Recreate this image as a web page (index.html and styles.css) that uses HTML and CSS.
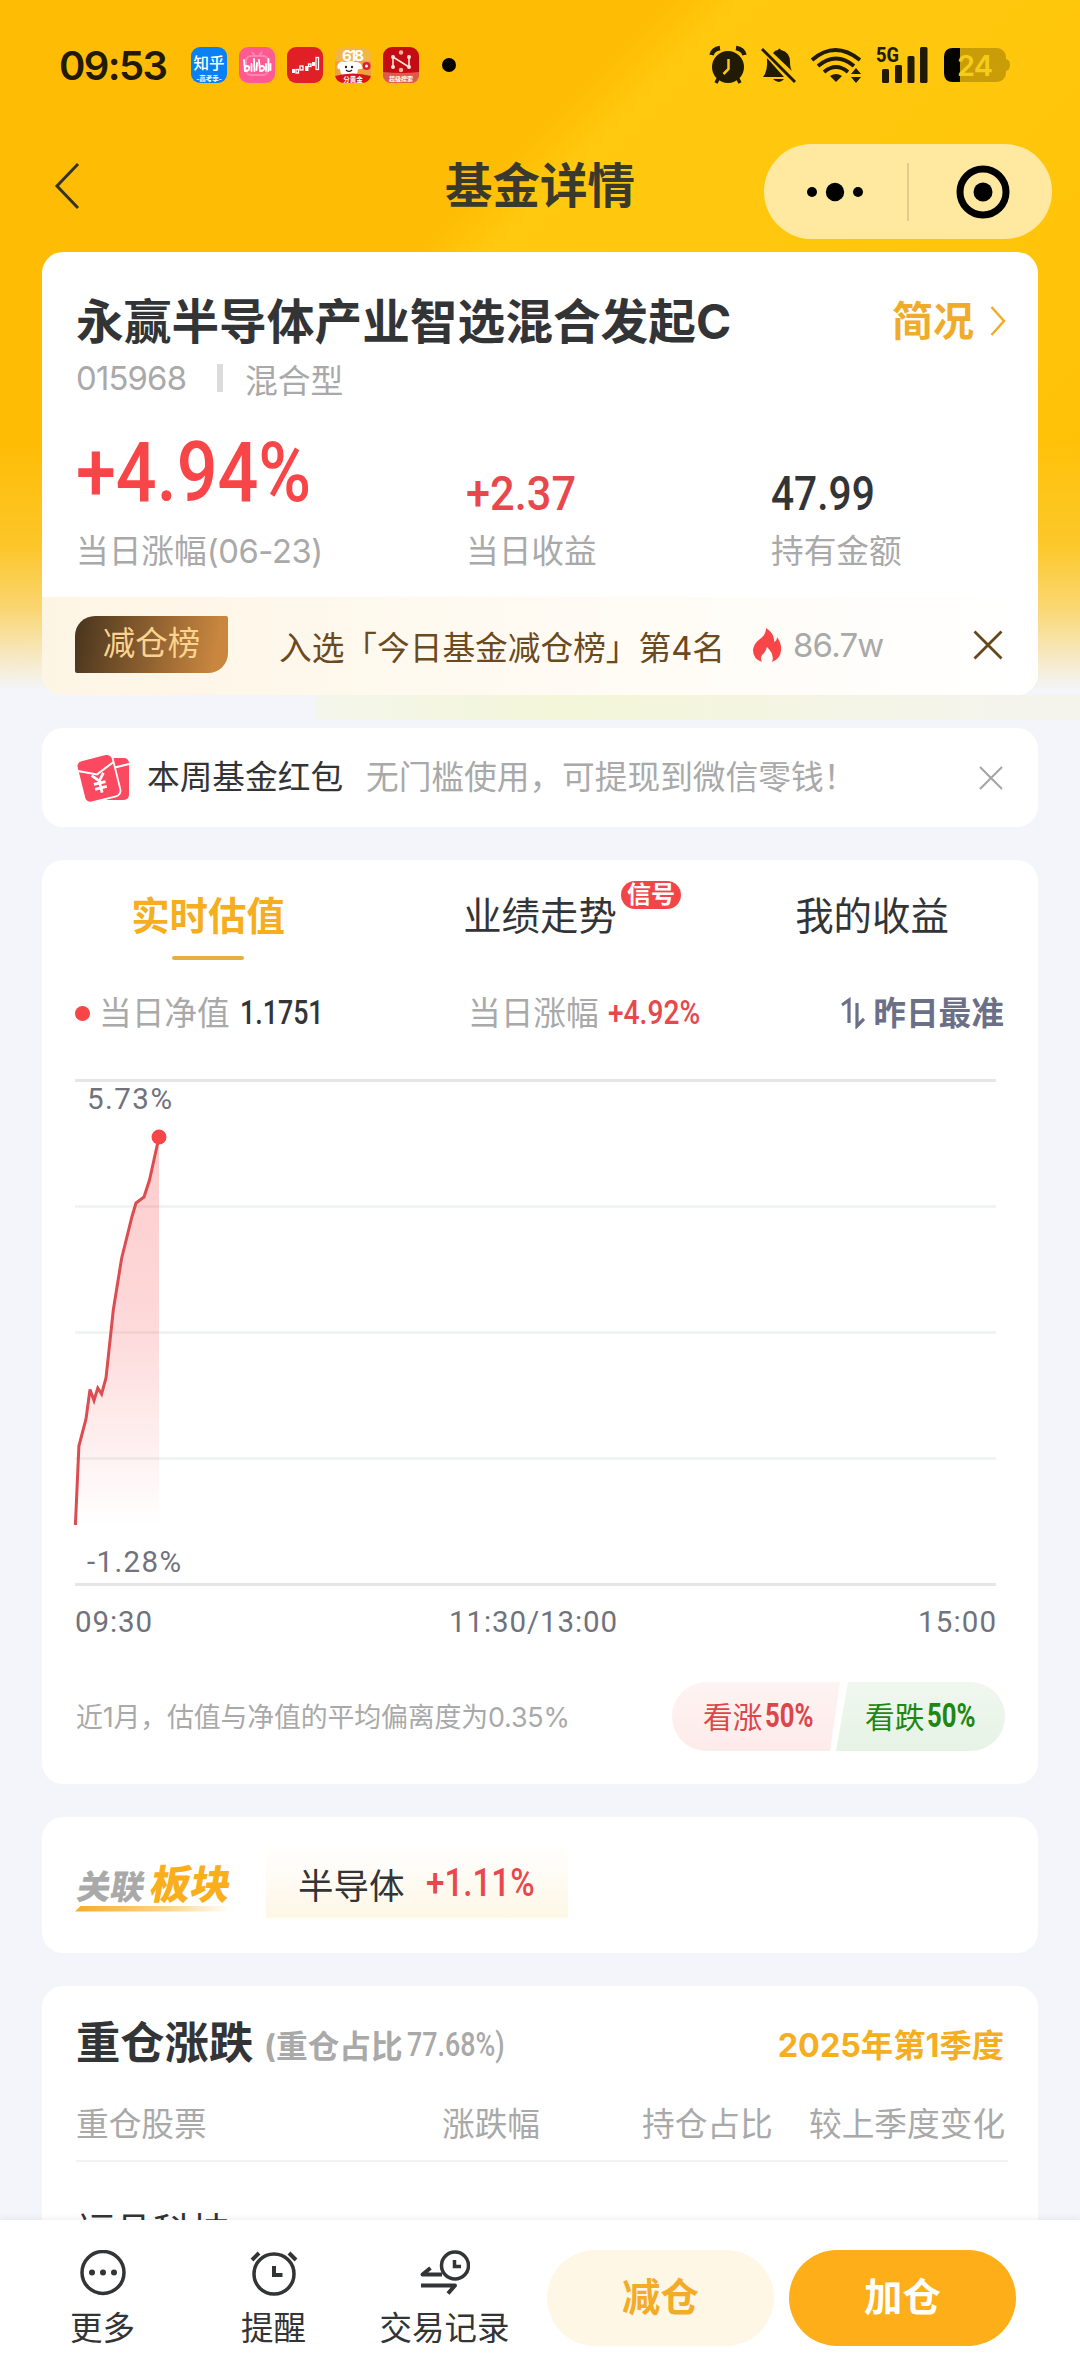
FILE: index.html
```html
<!DOCTYPE html>
<html lang="zh-CN">
<head>
<meta charset="utf-8">
<title>基金详情</title>
<link rel="stylesheet" href="styles.css">
</head>
<body>
<div class="page">
  <main class="content">
    <div class="status">
      <span class="clock">09:53</span>
      <div class="apps">
        <svg width="36" height="36" viewBox="0 0 36 36"><rect width="36" height="36" rx="9" fill="#0a80f5"/><text x="18" y="22" font-size="15.5" font-weight="500" fill="#fff" text-anchor="middle">知乎</text><text x="18" y="34" font-size="6.5" font-weight="700" fill="#fff" text-anchor="middle">-高考季-</text></svg>
        <svg width="36" height="36" viewBox="0 0 36 36"><rect width="36" height="36" rx="9" fill="#ff5b92"/><path d="M13 5l3 4M23 5l-3 4" stroke="#ff86b0" stroke-width="2"/><rect x="7" y="9" width="22" height="19" rx="5" fill="none" stroke="#ff86b0" stroke-width="2"/><g fill="none" stroke="#fff" stroke-width="1.8" stroke-linecap="round"><path d="M5 13l1 11q5 0 4-4q-2-2-4 0M12.500 17v7M15 12l.5 12M18 16l-.5 7M20 13l1 11q5 0 4-4q-2-2-4 0M27 17v7M29.500 12v12M31.500 17v6"/></g></svg>
        <svg width="36" height="36" viewBox="0 0 36 36"><rect width="36" height="36" rx="9" fill="#e01f26"/><g fill="#fff"><rect x="5" y="22" width="3" height="4"/><rect x="18" y="19" width="3.500" height="5"/><rect x="25" y="15" width="3" height="4"/></g><g fill="none" stroke="#fff" stroke-width="1.300"><rect x="9" y="22.500" width="2.500" height="3.500"/><rect x="13" y="19" width="3" height="4"/><rect x="21.500" y="17" width="2.500" height="2.500"/><rect x="29" y="10.500" width="2.500" height="12"/></g></svg>
        <svg width="36" height="36" viewBox="0 0 36 36"><rect width="36" height="36" rx="9" fill="#f3b545"/><rect width="36" height="15" y="14" fill="#e8963e" opacity=".6"/><text x="18" y="14" font-size="15" font-weight="700" fill="#fff" text-anchor="middle" textLength="22">618</text><path d="M2 20q2-7 8-5q6-2 10 0q6-1 8 6q-3 2-5 1q0 8-9 8t-9-8q-2 1-3-2z" fill="#fff"/><circle cx="11" cy="20" r="1.200" fill="#222"/><circle cx="17" cy="20" r="1.200" fill="#222"/><path d="M11 23q3 3 6 0" fill="none" stroke="#222" stroke-width="1.200"/><circle cx="31.500" cy="19" r="4" fill="#d8232a"/><circle cx="31.500" cy="19" r="1.500" fill="#fff"/><path d="M0 29q18-5 36 0q-2 7-9 7H9q-7 0-9-7z" fill="#d8131b"/><text x="18" y="35" font-size="6.500" font-weight="700" fill="#fff" text-anchor="middle">分黄金</text></svg>
        <svg width="36" height="36" viewBox="0 0 36 36"><rect width="36" height="36" rx="9" fill="#c40c14"/><path d="M0 25q18 2 36 0v2q0 9-9 9H9q-9 0-9-9z" fill="#dd5a4e"/><g stroke="#ffe3d8" stroke-width="1.600" fill="#ffe3d8"><path d="M10 20V10l16 10V10" fill="none"/><circle cx="10" cy="10" r="1.200"/><circle cx="10" cy="20" r="1.200"/><circle cx="26" cy="10" r="1.200"/><circle cx="26" cy="20" r="1.200"/></g><circle cx="18" cy="5.500" r="2.200" fill="#f6b5a8"/><circle cx="18" cy="23" r="2.200" fill="#f6b5a8"/><text x="18" y="34" font-size="6" font-weight="700" fill="#fff" text-anchor="middle">超级搜索</text></svg>
      </div>
      <span class="more-dot"></span>
      <div class="system">
        <svg width="38" height="40" viewBox="0 0 38 40"><circle cx="19" cy="22" r="16" fill="#211a04"/><g stroke="#211a04" fill="none"><path d="M2.500 10Q4 4 11 3M27 3q7 1 8.500 7" stroke-width="4.500"/><path d="M9.500 33l-2.500 5M28.500 33l2.500 5" stroke-width="3.500"/></g><path d="M19.500 14v10l-5 5" fill="none" stroke="#fdc60c" stroke-width="2.500"/></svg>
        <svg class="bell" width="38" height="38" viewBox="0 0 38 38"><path d="M13 7q2-3 5-3q1-3 3 0q9 2 9 12q0 6 2 9zM7 12l17 19H3q5-6 4-19z" fill="#211a04"/><path d="M13 33h11q-5 6-11 0z" fill="#211a04"/><path d="M2 3l33 33" stroke="#211a04" stroke-width="3"/></svg>
        <svg class="wifi" width="54" height="38" viewBox="0 0 54 38"><g fill="none" stroke="#211a04" stroke-width="3.800"><path d="M2 14q23-20 48 0"/><path d="M8 20q18-15 36 0"/><path d="M14 26q12-10 24 0"/></g><path d="M20 30q6-4 12 0l-6 6z" fill="#211a04"/><path d="M41 28l5-6l5 6zM41 31l5 6l5-6z" fill="#211a04"/></svg>
        <svg class="signal" width="54" height="40" viewBox="0 0 54 40"><g fill="#211a04"><rect x="7" y="24" width="7" height="14" rx="1.500"/><rect x="20" y="20" width="7" height="18" rx="1.500"/><rect x="32.500" y="11" width="7" height="27" rx="1.500"/><rect x="45" y="2" width="7.500" height="36" rx="1.500"/><text class="net" x="1" y="16.500" textLength="23" lengthAdjust="spacingAndGlyphs">5G</text></g></svg>
        <svg class="battery" width="68" height="36" viewBox="0 0 68 36"><rect x="1" y="1" width="62" height="34" rx="9" fill="#c99d08"/><path d="M63 12q4 1 4 6t-4 6z" fill="#c99d08"/><path d="M17 1v34h-7q-9 0-9-9V10q0-9 9-9z" fill="#050400"/><text x="14" y="29" font-size="29" font-weight="600" fill="#f5cd18" textLength="36">24</text></svg>
      </div>
    </div>

    <div class="nav">
      <svg class="back" width="28" height="48" viewBox="0 0 28 48"><path d="M26 2L5 24l21 22" fill="none" stroke="#333426" stroke-width="3"/></svg>
      <h1>基金详情</h1>
      <div class="capsule">
        <svg width="58" height="20" viewBox="0 0 58 20"><circle cx="6" cy="10" r="5"/><circle cx="29" cy="10" r="9.200"/><circle cx="52" cy="10" r="5"/></svg>
        <span class="divider"></span>
        <svg width="54" height="54" viewBox="0 0 54 54"><circle cx="27" cy="27" r="23" fill="none" stroke="#000" stroke-width="7"/><circle cx="27" cy="27" r="9.500"/></svg>
      </div>
    </div>

    <section class="card summary">
      <div class="title-row"><h2>永赢半导体产业智选混合发起C</h2><div class="brief">简况<svg width="16" height="32" viewBox="0 0 16 32"><path d="M1.500 2L14 16L1.500 30" fill="none" stroke="#f0ab2a" stroke-width="2.500"/></svg></div></div>
      <div class="code-row"><span class="code">015968</span><i></i><span>混合型</span></div>
      <div class="stats">
        <div><b class="din big">+4.94%</b><span>当日涨幅<em>(06-23)</em></span></div>
        <div><b class="din red">+2.37</b><span>当日收益</span></div>
        <div><b class="din dark">47.99</b><span>持有金额</span></div>
      </div>
      <div class="rank">
        <span class="rank-tag">减仓榜</span>
        <span class="rank-text">入选「今日基金减仓榜」第4名</span>
        <svg width="30" height="34" viewBox="0 0 30 34"><path d="M14 0Q23 6 22 14Q25 13 25 9Q30 16 29 23Q28 31 20 34Q23 27 15 19Q13 25 10 27Q8 30 10 34Q1 31 1 22Q2 15 8 11Q14 7 14 0Z" fill="#f84548"/></svg>
        <span class="heat">86.7w</span>
        <svg class="close" width="30" height="30" viewBox="0 0 30 30"><path d="M1.500 1.500l27 27M28.500 1.500l-27 27" stroke="#65471d" stroke-width="2.800"/></svg>
      </div>
    </section>

    <section class="card packet">
      <svg width="53" height="50" viewBox="0 0 53 50"><rect x="25" y="5" width="27" height="42" rx="5" fill="#fb4a60"/><path d="M36 15l16-4" stroke="#fff" stroke-width="2"/><g transform="rotate(-14 22 25)"><rect x="3" y="3.500" width="37" height="43.500" rx="6" fill="#fb4a60" stroke="#fff" stroke-width="1.800"/><path d="M3 13l18 8l19-8" fill="none" stroke="#fff" stroke-width="2"/><path d="M15.500 21l6 7l6-7M21.500 28v12M15.500 30h12M15.500 35h12" fill="none" stroke="#fff" stroke-width="2.800"/></g></svg>
      <strong>本周基金红包</strong>
      <span>无门槛使用，可提现到微信零钱！</span>
      <svg class="close" width="24" height="24" viewBox="0 0 24 24"><path d="M1 1l22 22M23 1L1 23" stroke="#a3a3a3" stroke-width="2"/></svg>
    </section>

    <section class="card valuation">
      <div class="tabs">
        <div class="tab active">实时估值</div>
        <div class="tab">业绩走势<span class="signal-badge">信号</span></div>
        <div class="tab">我的收益</div>
      </div>
      <div class="info">
        <i></i><span>当日净值</span><b class="din nav-value">1.1751</b>
        <span class="second">当日涨幅</span><b class="din change">+4.92%</b>
        <div class="accurate"><svg width="24" height="32" viewBox="0 0 24 32"><path d="M1 8l7-5v23M16 6v23l7-7" fill="none" stroke="#6b7088" stroke-width="3.200"/></svg>昨日最准</div>
      </div>
      <svg class="chart" width="930" height="561" viewBox="0 0 930 561">
        <defs><linearGradient id="area" x1="0" y1="58" x2="0" y2="446" gradientUnits="userSpaceOnUse"><stop offset="0" stop-color="#f84548" stop-opacity=".28"/><stop offset=".5" stop-color="#f84548" stop-opacity=".2"/><stop offset="1" stop-color="#f84548" stop-opacity="0"/></linearGradient></defs>
        <path d="M0 127.500h921M0 253.500h921M0 379.500h921" stroke="#f0f1f1" stroke-width="2.500"/>
        <path d="M0 1.500h921M0 505.500h921" stroke="#e5e6e6" stroke-width="3"/>
        <path d="M.4 446L3.900 367L11 340L15 310.500L19 321.500L22.800 309L26.600 315L31 299L38.300 231L46.600 179.500L57 137.500L61 124L69 118L74.500 101L84 58V446Z" fill="url(#area)"/>
        <path d="M.4 446L3.900 367L11 340L15 310.500L19 321.500L22.800 309L26.600 315L31 299L38.300 231L46.600 179.500L57 137.500L61 124L69 118L74.500 101L84 58" fill="none" stroke="#dc4c50" stroke-width="3"/>
        <circle cx="84" cy="58" r="7.500" fill="#f84548"/>
        <g class="axis">
          <text x="12" y="30" textLength="85">5.73%</text>
          <text x="12" y="493" textLength="94">-1.28%</text>
          <text x="0" y="553" textLength="77">09:30</text>
          <text x="374" y="553" textLength="168">11:30/13:00</text>
          <text x="843" y="553" textLength="78">15:00</text>
        </g>
      </svg>
      <div class="vote">
        <span class="note">近1月，估值与净值的平均偏离度为0.35%</span>
        <div class="up">看涨<b class="din">50%</b></div>
        <div class="down">看跌<b class="din">50%</b></div>
      </div>
    </section>

    <section class="card sector">
      <div class="sector-logo"><div><span>关联</span><b>板块</b></div><i></i></div>
      <div class="chip">半导体<b class="din">+1.11%</b></div>
    </section>

    <section class="card holdings">
      <div class="hold-title"><h3>重仓涨跌</h3><span class="ratio">(重仓占比</span><b class="din">77.68%)</b><span class="quarter">2025年第1季度</span></div>
      <div class="hold-head"><span>重仓股票</span><span>涨跌幅</span><span>持仓占比</span><span>较上季度变化</span></div>
      <div class="stock">福晶科技</div>
    </section>
  </main>

  <footer class="bottom">
    <div class="action"><svg width="50" height="46" viewBox="0 0 50 46"><g transform="translate(25 22.500)"><circle r="21" fill="none" stroke="#333436" stroke-width="3.500"/><circle cx="-11" r="3" fill="#333436"/><circle r="3" fill="#333436"/><circle cx="11" r="3" fill="#333436"/></g></svg>更多</div>
    <div class="action"><svg width="50" height="46" viewBox="0 0 50 46"><g fill="none" stroke="#333436" stroke-width="3.500"><circle cx="25" cy="24" r="20"/><path d="M25 16v9h8.500" stroke-width="4"/><path d="M3 10l7-7M47 10l-7-7" stroke-width="4"/></g></svg>提醒</div>
    <div class="action"><svg width="50" height="46" viewBox="0 0 50 46"><g fill="none" stroke="#333436" stroke-width="3.500"><circle cx="35" cy="15.500" r="13.500"/><path d="M34.500 10v6.500h6.500"/><path d="M22 24.500H2.500l8-6.500M1 35.500h34l-7 8" stroke-width="4" stroke-linejoin="round"/></g></svg>交易记录</div>
    <div class="btn light">减仓</div>
    <div class="btn solid">加仓</div>
  </footer>
</div>
</body>
</html>
```
FILE: styles.css
```css
* { box-sizing: border-box; margin: 0; padding: 0; }
body { width: 1080px; height: 2376px; overflow: hidden; font-family: Inter, "Noto Sans CJK SC", sans-serif; color: #333436; }
svg { display: block; flex: none; }
svg text { font-family: Inter, "Noto Sans CJK SC", sans-serif; }
i, em { font-style: normal; }

.page {
  display: flex; flex-direction: column; width: 1080px; height: 2376px;
  background:
    linear-gradient(90deg, transparent 316px, #f3f6dc80 316px, #f3f6d8 560px, #f4f4ec 1000px) 0 695px / 1080px 25px no-repeat,
    linear-gradient(180deg, transparent 440px, #f9cf4c80 545px, #f8e2a6b0 610px, #f4f5fa 690px),
    linear-gradient(135deg, #ffbc04 0, #ffbc04 470px, #ffc90f 525px, #ffc60c 800px, #ffc108 1100px) 0 0 / 1080px 695px no-repeat,
    #f4f5fa;
}
.content { height: 2220px; overflow: hidden; flex: none; }

.din { display: block; flex: none; font-family: Roboto, sans-serif; font-weight: 500; white-space: nowrap; transform-origin: 0 50%; }

/* status bar */
.status { display: flex; align-items: center; height: 130px; padding-left: 59px; }
.clock { width: 132px; font-size: 40px; font-weight: 600; letter-spacing: -1.600px; color: #211a04; }
.apps { display: flex; gap: 12px; }
.more-dot { width: 14px; height: 14px; margin-left: 23px; border-radius: 50%; background: #050400; }
.system { display: flex; align-items: center; margin-left: 253px; height: 40px; }
.bell { margin-left: 13px; }
.wifi { margin-left: 12px; }
.signal { margin-left: 11px; overflow: visible; }
.signal .net { font-family: Roboto, sans-serif; font-size: 20px; font-weight: 800; }
.battery { margin-left: 14px; }

/* title bar */
.nav { display: grid; grid-template-columns: 1fr auto 1fr; align-items: center; height: 95px; margin: 14px 28px 13px 52px; }
.back { margin-top: -12px; }
.nav h1 { margin: -12px 24px 0 0; font-size: 47.500px; line-height: 60px; font-weight: 700; color: #3a3a2c; }
.capsule { display: flex; align-items: center; justify-self: end; width: 288px; height: 95px; padding-left: 42px; border-radius: 48px; background: #ffe9a0; }
.divider { width: 2px; height: 58px; margin: 0 47px 0 43px; background: #e0cc8c; }

.card { width: 996px; margin: 0 42px 33px; border-radius: 21px; background: #fff; }

/* fund summary */
.summary { height: 443px; padding-top: 40px; overflow: hidden; }
.title-row { display: flex; justify-content: space-between; height: 60px; line-height: 60px; padding: 0 32px 0 34px; }
.title-row h2 { font-size: 47.700px; font-weight: 700; white-space: nowrap; }
.brief { display: flex; align-items: center; gap: 16px; font-size: 41px; font-weight: 700; color: #f0ab2a; line-height: 58px; height: 58px; }
.code-row { display: flex; align-items: center; height: 44px; margin-top: 4px; padding-left: 34px; font-size: 32.800px; color: #a9a9a9; }
.code { width: 141px; letter-spacing: -.8px; }
.code-row i { width: 6px; height: 28px; margin-right: 22px; background: #dcdcdc; }
.stats { display: grid; grid-template-columns: 390px 305px 1fr; align-items: end; margin-top: 31px; padding-left: 34px; }
.stats span { display: block; height: 40px; line-height: 40px; font-size: 32.700px; color: #a9a9a9; }
.stats em { letter-spacing: -.4px; }
.stats .din { width: 200px; margin-bottom: 13px; font-size: 49px; line-height: 49px; transform: scaleX(.84); }
.stats .big { margin-bottom: 16px; font-size: 84px; line-height: 84px; color: #f84548; transform: scaleX(.855); }
.stats .red { color: #e8484c; transform: scaleX(.885); }
.stats .dark { transform: scaleX(.83); }
.rank { display: flex; align-items: center; height: 98px; margin-top: 26px; padding: 0 35px 3px 33px; background: linear-gradient(90deg, #fdf5e4, #fffbf4 55%, #fff); }
.rank-tag { width: 153px; height: 57px; line-height: 56px; border-radius: 20px 2px; background: linear-gradient(100deg, #48341d, #c8863f 90%); color: #fbd391; font-size: 32.500px; text-align: center; }
.rank-text { flex: none; width: 524px; padding: 2px 0 0 51px; font-size: 32.700px; color: #6b4a1e; white-space: nowrap; }
.heat { margin-left: 11px; font-size: 33px; letter-spacing: -.8px; color: #a9a9a9; }
.close { margin-left: auto; }

/* red packet */
.packet { display: flex; align-items: center; height: 99px; padding: 0 35px 0 35px; font-size: 32.700px; line-height: 40px; white-space: nowrap; }
.packet strong { width: 219px; margin: -2px 0 0 17px; font-weight: 400; }
.packet span { margin-top: -2px; color: #a9a9a9; }

/* live valuation */
.valuation { height: 924px; padding-top: 18px; }
.tabs { display: grid; grid-template-columns: repeat(3, 1fr); height: 82px; font-size: 38.400px; line-height: 77px; }
.tab { position: relative; text-align: center; }
.active { font-weight: 700; color: #f5ae1e; }
.active::after { content: ""; display: block; width: 72px; height: 4px; margin: 1px auto 0; border-radius: 2px; background: #e3b23e; }
.signal-badge { position: absolute; left: 247px; top: 3px; width: 60px; height: 28px; line-height: 28px; border-radius: 14px; background: #f24548; color: #fff; font-size: 24px; font-weight: 700; }
.info { display: flex; align-items: center; height: 40px; margin-top: 33px; padding-left: 33px; font-size: 32.700px; line-height: 38px; color: #a9a9a9; }
.info i { width: 15px; height: 15px; margin-right: 9px; border-radius: 50%; background: #f84548; }
.info span { width: 141px; margin-top: -1px; white-space: nowrap; }
.info .din { font-size: 33.500px; }
.nav-value { width: 228px; color: #333436; transform: scaleX(.8); }
.info .second { width: 140px; }
.change { width: 120px; color: #e8484c; transform: scaleX(.84); }
.accurate { display: flex; align-items: center; gap: 8px; margin: -1px 34px 0 auto; font-weight: 700; color: #6b7088; }
.chart { margin: 46px 0 0 33px; overflow: visible; }
.chart .axis text { font-family: Roboto, sans-serif; font-size: 29.500px; fill: #70727c; }
.vote { display: flex; align-items: center; height: 69px; margin-top: 42px; padding: 0 33px 0 34px; }
.note { width: 596px; margin-top: -2px; font-size: 26.900px; letter-spacing: -.15px; color: #a9a9a9; white-space: nowrap; }
.up, .down { display: flex; align-items: center; height: 69px; padding-bottom: 2px; font-size: 29.700px; white-space: nowrap; }
.up { width: 168px; padding-left: 31px; border-radius: 35px 0 0 35px; background: linear-gradient(180deg, #fef4f3, #fdebea); color: #dc464a; clip-path: polygon(0 0, 100% 0, calc(100% - 10px) 100%, 0 100%); }
.down { width: 169px; margin-left: -4px; padding-left: 29px; border-radius: 0 35px 35px 0; background: linear-gradient(180deg, #f0f7ef, #e6f3e5); color: #1f8714; clip-path: polygon(12px 0, 100% 0, 100% 100%, 0 100%); }
.vote .din { width: 50px; margin-left: 3px; font-size: 33px; font-weight: 700; transform: scaleX(.78); }

/* related sector */
.sector { display: flex; align-items: center; height: 136px; padding: 0 0 8px 33px; }
.sector-logo { width: 191px; padding-top: 14px; }
.sector-logo div { display: flex; align-items: baseline; height: 40px; line-height: 40px; padding-left: 3px; transform: skewX(-10deg); }
.sector-logo span { width: 73px; font-size: 33.500px; font-weight: 800; color: #a9a9a9; white-space: nowrap; }
.sector-logo b { font-size: 40px; font-weight: 900; color: #faae1c; white-space: nowrap; }
.sector-logo i { display: block; width: 156px; height: 6px; margin-top: 1px; background: linear-gradient(90deg, #f5ad25, #fbd68d 60%, #fff); clip-path: polygon(6px 0, 100% 0, 97% 100%, 0 100%); }
.chip { display: flex; align-items: center; width: 302px; height: 74px; padding: 4px 0 0 32px; background: linear-gradient(180deg, #fff, #fef7e6); font-size: 35.500px; }
.chip .din { margin-left: 21px; font-size: 39px; color: #e8484c; transform: scaleX(.85); }

/* top holdings */
.holdings { height: 400px; padding-top: 28px; }
.hold-title { display: flex; align-items: center; height: 60px; padding: 0 34px 0 34px; white-space: nowrap; }
.hold-title h3 { width: 188px; font-size: 44.300px; line-height: 58px; height: 60px; font-weight: 700; }
.ratio { width: 143px; font-size: 31.700px; font-weight: 700; color: #a9a9a9; }
.hold-title .din { font-size: 34px; color: #a9a9a9; transform: scaleX(.79); }
.quarter { margin: -2px 0 0 auto; font-size: 32.300px; font-weight: 700; color: #f5ae1e; }
.hold-head { display: grid; grid-template-columns: 366px 200px 167px 1fr; height: 58px; margin: 30px 30px 0 34px; border-bottom: 2px solid #f2f2f2; font-size: 32.700px; line-height: 40px; color: #a9a9a9; white-space: nowrap; }
.stock { margin: 40px 0 0 34px; font-size: 38.400px; line-height: 60px; }

/* bottom action bar */
.bottom { display: flex; height: 156px; padding: 30px 0 0 17px; background: #fff; box-shadow: 0 -2px 5px #0000000d; flex: none; }
.action { display: flex; flex-direction: column; align-items: center; width: 171px; font-size: 32.500px; line-height: 40px; gap: 2px; white-space: nowrap; }
.action svg { margin-bottom: 11px; }
.btn { width: 227px; height: 96px; line-height: 94px; border-radius: 48px; text-align: center; font-size: 38.400px; font-weight: 700; }
.light { margin-left: 17px; background: #fef7e6; color: #f3ac28; }
.solid { margin-left: 15px; background: #fdae18; color: #fff; }
```
